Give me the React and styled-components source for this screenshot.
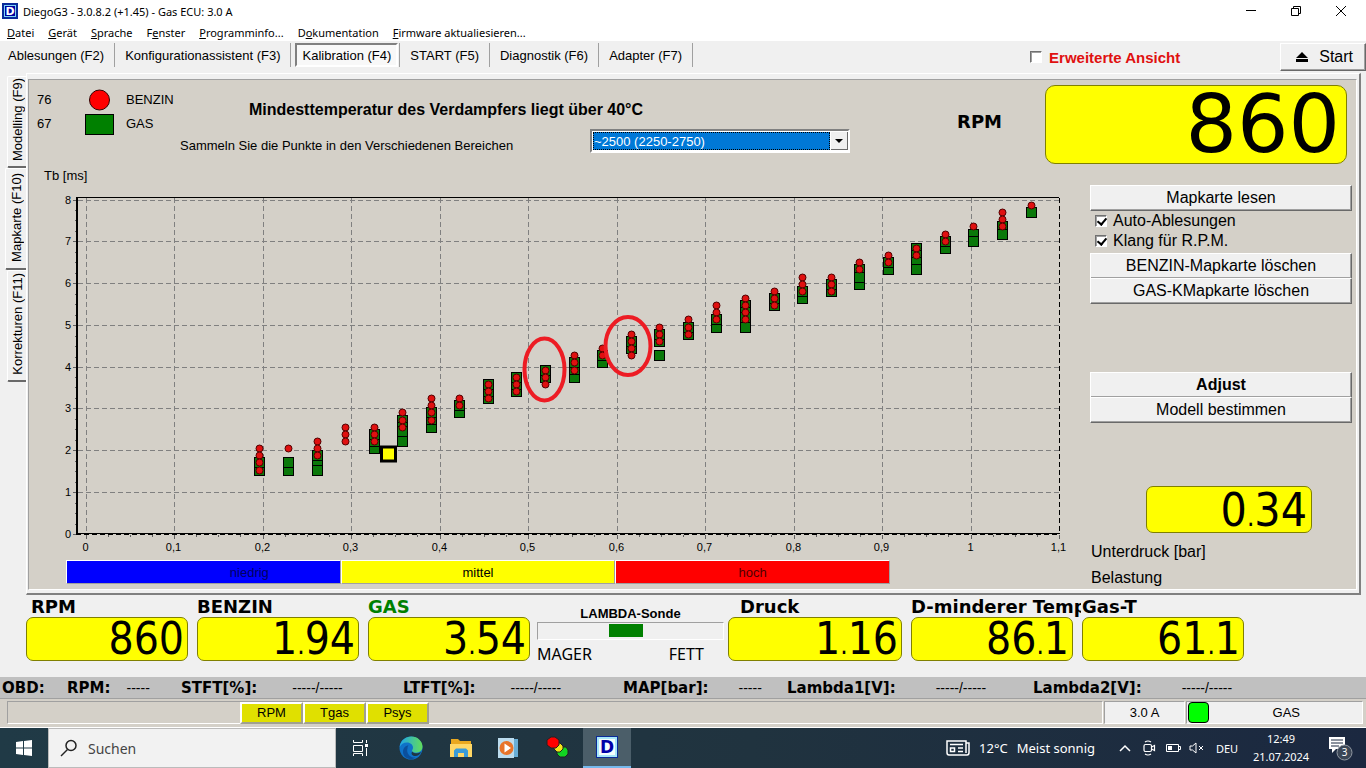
import React from "react";
import styled, { createGlobalStyle } from "styled-components";

const GlobalStyle = createGlobalStyle`
  * {
    box-sizing: border-box;
  }
  body {
    margin: 0;
    background: #f0f0f0;
    color: #000;
    font-family: "Liberation Sans", Arial, sans-serif;
    font-size: 13px;
  }
  button, input, select {
    margin: 0;
    font-family: inherit;
    color: inherit;
  }
`;

const Window = styled.div`
  display: flex;
  flex-direction: column;
  min-height: 100vh;
  overflow: hidden;
`;

/* title bar and menu */

const TitleBar = styled.header`
  display: flex;
  align-items: center;
  height: 22px;
  padding: 0 3px 0 2px;
  background: #fff;
  font-family: "Noto Sans", sans-serif;
`;

const AppBadge = styled.span`
  display: flex;
  align-items: center;
  justify-content: center;
  width: ${(p) => p.$size}px;
  height: ${(p) => p.$size}px;
  border: ${(p) => (p.$glow ? 1 : 2)}px solid #0a2a9a;
  box-shadow: ${(p) => (p.$glow ? "inset 0 0 0 2px #a6e6fb" : "inset 0 0 0 1px #7fd4f5")};
  background: ${(p) => (p.$glow ? "#f4fdff" : "#0000a0")};
  color: ${(p) => (p.$glow ? "#0000a8" : "#fff")};
  font-family: "DejaVu Sans", Verdana, sans-serif;
  font-size: ${(p) => p.$size - 5}px;
  font-weight: bold;
  line-height: 1;
`;

const Title = styled.h1`
  margin: 0 auto 0 5px;
  font-size: 11px;
  font-weight: normal;
`;

const WindowButton = styled.button`
  display: flex;
  align-items: center;
  justify-content: center;
  width: 45px;
  height: 22px;
  padding: 0;
  border: 0;
  background: none;
`;

const MenuBar = styled.nav`
  display: flex;
  align-items: center;
  gap: 14px;
  height: 19px;
  padding: 2px 0 0 7px;
  background: #fff;
  font-family: "Noto Sans", sans-serif;
  font-size: 11px;
`;

const MenuLink = styled.a`
  color: #000;
  text-decoration: none;
  white-space: nowrap;
`;

/* function key tool bar */

const ToolBar = styled.div`
  display: flex;
  align-items: center;
  height: 32px;
`;

const ToolTab = styled.button`
  height: 24px;
  margin: ${(p) => (p.$pressed ? "0 1px 4px 4px" : "0 0 4px")};
  padding: 0 ${(p) => (p.$pressed ? 5 : 10)}px;
  border: ${(p) => (p.$pressed ? "2px solid" : "0 solid")};
  border-color: #808080 #fff #fff #808080;
  background: ${(p) => (p.$pressed ? "#f8f8f8" : "none")};
  font-size: 13px;
  white-space: nowrap;
  &:first-child {
    padding-left: 8px;
  }
`;

const Divider = styled.span`
  width: 1px;
  height: 24px;
  margin-bottom: 4px;
  background: #a0a0a0;
`;

const Extended = styled.label`
  display: flex;
  align-items: center;
  gap: 7px;
  margin: 0 100px 0 auto;
  color: #e01010;
  font-size: 15px;
  font-weight: bold;
`;

const Check = styled.input`
  appearance: none;
  position: relative;
  width: 12px;
  height: 12px;
  border: 1px solid;
  border-color: #707070 #fff #fff #707070;
  box-shadow: inset 1px 1px #a0a0a0;
  background: #fff;
  &:checked::after {
    content: "";
    position: absolute;
    left: 3px;
    top: 0;
    width: 4px;
    height: 7px;
    border: solid #000;
    border-width: 0 2px 2px 0;
    transform: rotate(40deg);
  }
`;

const RaisedButton = styled.button`
  height: 26px;
  padding: 0 8px;
  border: 1px solid;
  border-color: #fff #696969 #696969 #fff;
  box-shadow: inset -1px -1px #a0a0a0;
  background: #f0f0f0;
  font-size: 16px;
  font-weight: ${(p) => (p.$strong ? "bold" : "normal")};
  line-height: 22px;
  white-space: nowrap;
`;

const StartButton = styled(RaisedButton)`
  display: flex;
  align-items: center;
  gap: 11px;
  height: 28px;
  padding: 0 12px 0 15px;
`;

/* main area */

const Main = styled.main`
  display: flex;
  flex: 1;
  padding-right: 5px;
`;

const Rail = styled.div`
  display: flex;
  flex-direction: column;
  align-items: flex-end;
  width: 26px;
  padding-top: 3px;
`;

const RailTab = styled.button`
  width: ${(p) => (p.$active ? 21 : 19)}px;
  height: ${(p) => p.$length}px;
  padding: 0;
  border: solid;
  border-width: 1px 0 2px 1px;
  border-color: #fff #fff #696969 #fff;
  border-radius: 2px 0 0 2px;
  background: #f0f0f0;
  font-size: 13px;
  & > span {
    writing-mode: vertical-rl;
    transform: rotate(180deg);
    white-space: nowrap;
  }
`;

const Sheet = styled.section`
  display: flex;
  flex: 1;
  min-width: 0;
  padding: 5px 2px 3px 1px;
  border: 2px solid;
  border-width: 1px 2px 2px 1px;
  border-color: #fff #808080 #808080 #fff;
`;

const Panel = styled.div`
  flex: 1;
  min-width: 0;
  border: 1px solid;
  border-color: #a0a0a0 #fff #fff #a0a0a0;
  background: #d4d0c8;
`;

const Top = styled.div`
  display: flex;
  align-items: flex-start;
  height: 86px;
  padding: 5px 9px 0 8px;
`;

const Legend = styled.ul`
  display: flex;
  flex-direction: column;
  width: 143px;
  margin: 3px 0 0;
  padding: 0;
  list-style: none;
`;

const LegendItem = styled.li`
  display: grid;
  grid-template-columns: 48px 29px 1fr;
  align-items: center;
  height: 24px;
  line-height: 16px;
  & > b {
    padding-left: 12px;
    font-weight: normal;
  }
`;

const Guide = styled.div`
  display: flex;
  flex-direction: column;
  gap: 10px;
  padding-top: 16px;
`;

const Headline = styled.h2`
  margin: 0;
  padding-left: 69px;
  font-size: 16px;
  line-height: 18px;
`;

const GuideRow = styled.label`
  display: flex;
  align-items: flex-end;
  justify-content: space-between;
  width: 670px;
`;

const ComboBox = styled.div`
  position: relative;
  width: 260px;
  height: 24px;
  padding: 1px;
  border: 2px solid;
  border-color: #808080 #fff #fff #808080;
  background: #fff;
  & > svg {
    position: absolute;
    top: 1px;
    right: 0;
    pointer-events: none;
  }
`;

const RangeSelect = styled.select`
  display: block;
  appearance: none;
  width: 237px;
  height: 18px;
  padding: 0 1px;
  border: 0;
  outline: 1px dotted #000;
  outline-offset: -1px;
  border-radius: 0;
  background: #0078d7;
  color: #fff;
  font-size: 13px;
`;

const GaugeTitle = styled.h3`
  margin: 0;
  overflow: hidden;
  color: ${(p) => p.$color || "#000"};
  font-family: "DejaVu Sans", Verdana, sans-serif;
  font-size: 18px;
  line-height: 20px;
  white-space: nowrap;
`;

const MainReading = styled.div`
  display: flex;
  flex: 1;
  justify-content: flex-end;
  gap: 43px;
  & > h3 {
    padding-top: 27px;
  }
`;

const lcdSizes = {
  large: { width: 302, height: 79, font: 81, face: "DejaVu Sans", pad: 6, radius: 10 },
  medium: { width: 166, height: 47, font: 46, face: "DejaVu Sans Condensed", pad: 4, radius: 7 },
  small: { width: 162, height: 44, font: 44, face: "DejaVu Sans Condensed", pad: 3, radius: 7 },
  wide: { width: 174, height: 44, font: 44, face: "DejaVu Sans Condensed", pad: 3, radius: 7 },
};

const LcdFrame = styled.output`
  display: flex;
  align-items: center;
  justify-content: flex-end;
  width: ${(p) => p.$lcd.width}px;
  height: ${(p) => p.$lcd.height}px;
  padding-right: ${(p) => p.$lcd.pad}px;
  border: 1px solid #808000;
  border-radius: ${(p) => p.$lcd.radius}px;
  background: #ff0;
  color: #000;
  font-family: "${(p) => p.$lcd.face}", "DejaVu Sans", Verdana, sans-serif;
  font-size: ${(p) => p.$lcd.font}px;
  line-height: 1;
`;

/* the decimal point is set smaller than the digits to keep them close */
const Point = styled.span`
  font-size: 26px;
`;

const Body = styled.div`
  display: flex;
  justify-content: space-between;
`;

const ChartColumn = styled.div`
  flex: 1;
  min-width: 0;
`;

const AxisName = styled.div`
  height: 22px;
  padding: 2px 0 0 15px;
`;

const ChartSvg = styled.svg`
  display: block;
  width: 100%;
  height: auto;
  font-family: "Liberation Sans", Arial, sans-serif;
  font-size: 11px;
`;

const LoadBar = styled.div`
  display: grid;
  grid-template-columns: repeat(3, 1fr);
  margin: 0 190px 3px 37px;
`;

const LoadZone = styled.div`
  height: 24px;
  padding-left: ${(p) => p.$indent || 0}px;
  border: 1px solid;
  border-color: #fff #a0a0a0 #a0a0a0 #fff;
  background: ${(p) => p.$color};
  color: ${(p) => p.$ink || "#000"};
  line-height: 24px;
  text-align: center;
`;

const Side = styled.aside`
  display: flex;
  flex-direction: column;
  width: 276px;
  padding: 19px 4px 0 10px;
`;

const CheckRow = styled.label`
  display: flex;
  align-items: center;
  gap: 6px;
  height: 20px;
  padding-left: 5px;
  font-size: 16px;
`;

const ButtonGroup = styled.div`
  display: grid;
  grid-auto-rows: 25px;
  margin-top: ${(p) => p.$space}px;
`;

const LoadReading = styled.div`
  margin: 64px 0 2px 56px;
`;

const SideText = styled.div`
  margin-top: 8px;
  padding-left: 1px;
  font-size: 16px;
  line-height: 18px;
`;

/* readings under the sheet */

const Readings = styled.section`
  display: flex;
  gap: 9px;
  height: 82px;
  padding: 2px 0 0 26px;
`;

const Gauge = styled.div`
  width: ${(p) => p.$width}px;
  & > h3 {
    margin-right: -8px;
    padding-left: ${(p) => p.$indent || 0}px;
  }
`;

const Lambda = styled.div`
  width: 187px;
  margin: 0 -5px 0 -2px;
  padding-top: 9px;
  text-align: center;
  font-weight: bold;
  line-height: 16px;
`;

const LambdaTrack = styled.div`
  height: 18px;
  padding: 1px 80px 3px 71px;
  border: 1px solid;
  border-color: #a0a0a0 #fff #fff #a0a0a0;
  & > div {
    height: 13px;
    background: #008000;
  }
`;

const LambdaEnds = styled.div`
  display: flex;
  justify-content: space-between;
  padding: 4px 20px 0 0;
  font-family: "Noto Sans", Tahoma, sans-serif;
  font-size: 16px;
  font-weight: normal;
  line-height: 20px;
`;

const ObdBar = styled.section`
  display: grid;
  grid-template-columns: 65px 114px 222px 220px 164px 246px 1fr;
  align-items: center;
  height: 22px;
  padding-left: 2px;
  border-bottom: 1px solid #a0a0a0;
  background: #c0c0c0;
  font-size: 14px;
`;

const ObdItem = styled.div`
  display: flex;
  align-items: center;
  gap: ${(p) => p.$gap || 0}px;
  white-space: nowrap;
  & > b {
    font-family: "DejaVu Sans", Verdana, sans-serif;
    font-size: 15px;
  }
`;

const StatusBar = styled.footer`
  display: flex;
  gap: 1px;
  height: 29px;
  padding: 2px 3px 3px 7px;
  background: #d4d0c8;
  border-bottom: 1px solid #fff;
`;

const StatusCell = styled.div`
  display: flex;
  flex: ${(p) => (p.$width ? "none" : 1)};
  align-items: center;
  justify-content: ${(p) => (p.$width ? "center" : "flex-start")};
  width: ${(p) => (p.$width ? p.$width + "px" : "auto")};
  padding-left: ${(p) => p.$indent || 0}px;
  border: 1px solid;
  border-color: #a0a0a0 #fff #fff #a0a0a0;
  background: ${(p) => (p.$width ? "#f0f0f0" : "#d4d0c8")};
`;

const SensorButton = styled.button`
  width: 63px;
  height: 22px;
  padding: 0;
  border: 2px solid;
  border-color: #fff #a0a090 #a0a090 #fff;
  background: #e0e000;
  font-size: 13px;
`;

const FuelLamp = styled.span`
  width: 21px;
  height: 21px;
  margin: 0 auto 0 1px;
  border: 1px solid #000;
  border-radius: 4px;
  background: #0f0;
`;

const FuelName = styled.span`
  margin-right: 62px;
`;

/* desktop task bar */

const TaskBar = styled.nav`
  display: flex;
  align-items: center;
  height: 40px;
  background: linear-gradient(90deg, #203a46, #20333f 55%, #1b2840);
  color: #fff;
  font-family: "Noto Sans", sans-serif;
`;

const TaskButton = styled.button`
  display: flex;
  align-items: center;
  justify-content: center;
  width: ${(p) => p.$width || 49}px;
  height: 40px;
  padding: 0;
  border: solid #76b9ed;
  border-width: ${(p) => (p.$active ? "0 0 2px" : 0)};
  background: ${(p) => (p.$active ? "#4b5e69" : "none")};
  color: #fff;
  font-size: 11px;
`;

const SearchBox = styled.label`
  display: flex;
  align-items: center;
  gap: 10px;
  width: 288px;
  height: 40px;
  padding-left: 11px;
  border: 1px solid #bbb;
  background: #f2f2f2;
  & > input {
    width: 200px;
    padding: 0;
    border: 0;
    outline: 0;
    background: none;
    font-size: 14px;
  }
  & > input::placeholder {
    color: #444;
  }
`;

const Weather = styled.button`
  display: flex;
  align-items: center;
  gap: 9px;
  margin: 0 18px 0 auto;
  padding: 0;
  border: 0;
  background: none;
  color: #fff;
  font-size: 13px;
  white-space: nowrap;
`;

const Clock = styled.time`
  width: 70px;
  font-size: 11px;
  line-height: 18px;
  text-align: center;
`;

const columns = [
  { x: 259, petrol: [448, 455, 462, 470], gas: [465, 457] },
  { x: 288, petrol: [448], gas: [465, 457] },
  { x: 317, petrol: [441, 448, 455], gas: [457, 450, 465] },
  { x: 345, petrol: [427, 434, 441], gas: [] },
  { x: 374, petrol: [427, 434, 441], gas: [443, 436, 429] },
  { x: 402, petrol: [412, 420, 427], gas: [415, 422, 426, 436] },
  { x: 431, petrol: [398, 405, 412, 420], gas: [422, 414, 407] },
  { x: 459, petrol: [398, 405], gas: [407, 400] },
  { x: 488, petrol: [384, 391, 398], gas: [393, 386, 379] },
  { x: 516, petrol: [377, 384, 391], gas: [386, 379, 372] },
  { x: 545, petrol: [370, 377, 384], gas: [372, 365] },
  { x: 574, petrol: [355, 362, 370], gas: [372, 364, 357] },
  { x: 602, petrol: [348, 355], gas: [357, 350] },
  { x: 631, petrol: [334, 341, 348, 355], gas: [343, 336] },
  { x: 659, petrol: [327, 334, 341], gas: [336, 329, 350] },
  { x: 688, petrol: [319, 327, 334], gas: [329, 322] },
  { x: 716, petrol: [305, 312, 319], gas: [322, 314] },
  { x: 745, petrol: [298, 305, 312, 319], gas: [300, 307, 312, 322] },
  { x: 774, petrol: [291, 298, 305], gas: [300, 293] },
  { x: 802, petrol: [277, 284, 291], gas: [293, 286] },
  { x: 831, petrol: [277, 284, 291], gas: [286, 279] },
  { x: 859, petrol: [262, 269], gas: [279, 264, 272] },
  { x: 888, petrol: [255, 262], gas: [264, 257] },
  { x: 916, petrol: [248, 255], gas: [243, 250, 257, 264] },
  { x: 945, petrol: [234, 241], gas: [243, 236] },
  { x: 973, petrol: [226], gas: [229, 236] },
  { x: 1002, petrol: [212, 219, 226], gas: [221, 229] },
  { x: 1031, petrol: [205], gas: [207] },
];

const xTicks = ["0", "0,1", "0,2", "0,3", "0,4", "0,5", "0,6", "0,7", "0,8", "0,9", "1", "1,1"];
const yTicks = [0, 1, 2, 3, 4, 5, 6, 7, 8];
const xPos = (i) => Math.floor(86 + i * 88.5) + 0.5;
const yPos = (v) => Math.floor(534 - v * 41.75) + 0.5;

const MapChart = () => (
  <ChartSvg viewBox="29 188 1051 372" role="img" aria-label="Mapkarte">
    <g stroke="#808080" strokeDasharray="5 3">
      {xTicks.slice(0, -1).map((t, i) => (
        <line key={t} x1={xPos(i)} x2={xPos(i)} y1="198" y2="534" />
      ))}
      {yTicks.slice(1).map((t) => (
        <line key={t} x1="78" x2="1059" y1={yPos(t)} y2={yPos(t)} />
      ))}
    </g>
    <g stroke="#606060">
      {xTicks.map((t, i) => (
        <line key={t} x1={xPos(i)} x2={xPos(i)} y1="535" y2="539" />
      ))}
      {xTicks.slice(0, -1).flatMap((t, i) =>
        [22, 44, 66].map((d) => (
          <line key={t + d} x1={xPos(i) + d} x2={xPos(i) + d} y1="535" y2="537" />
        ))
      )}
      {yTicks.map((t) => (
        <line key={t} x1="73" x2="77" y1={yPos(t)} y2={yPos(t)} />
      ))}
      {yTicks.slice(0, -1).flatMap((t) =>
        [10, 21, 31].map((d) => (
          <line key={t + "-" + d} x1="75" x2="77" y1={yPos(t) - d} y2={yPos(t) - d} />
        ))
      )}
    </g>
    <path d="M76 197.5H1059" stroke="#000" />
    <path d="M77 197V534" stroke="#000" strokeWidth="2" />
    <path d="M76 533.5H1060" stroke="#000" />
    <path d="M76 534.5H1060" stroke="#000" strokeDasharray="5 3" />
    <path d="M1059.5 198V534" stroke="#000" strokeDasharray="5 3" />
    {xTicks.map((t, i) => (
      <text key={t} x={xPos(i) - 1} y="551" textAnchor="middle">{t}</text>
    ))}
    {yTicks.map((t) => (
      <text key={t} x="71" y={yPos(t) + 3.5} textAnchor="end">{t}</text>
    ))}
    {columns.map((c) => (
      <g key={c.x} stroke="#000">
        {c.gas.map((y) => (
          <rect key={y} x={c.x - 4.5} y={y + 0.5} width="10" height="10" fill="#0a780a" />
        ))}
        {c.petrol.map((y) => (
          <circle key={y} cx={c.x + 0.5} cy={y + 0.5} r="3.5" fill="#e01010" stroke="#500000" />
        ))}
      </g>
    ))}
    <rect x="381.5" y="447" width="14" height="14" fill="#ff0" stroke="#000" strokeWidth="3" />
    <g fill="none" stroke="#ed1c24" strokeWidth="4">
      <ellipse cx="544.5" cy="369.5" rx="20" ry="31" />
      <ellipse cx="628" cy="346" rx="22.5" ry="29" />
    </g>
  </ChartSvg>
);

const Lcd = ({ size, value, label }) => {
  const [whole, part] = value.split(".");
  return (
    <LcdFrame $lcd={lcdSizes[size]} aria-label={label}>
      <span>
        {whole}
        {part && <Point>.</Point>}
        {part}
      </span>
    </LcdFrame>
  );
};

const TaskIcons = () => (
  <>
    <TaskButton aria-label="Taskansicht" $width={48}>
      <svg width="17" height="16" viewBox="0 0 17 16" fill="none" stroke="#fff">
        <path d="M1.5 0V2.5H10.5V0M1.5 16V13.5H10.5V16M1.5 5.5H10.5V11.5H1.5ZM14.5 0V3M14.5 8V16" />
        <rect x="13.5" y="4.5" width="2" height="2" fill="#fff" />
      </svg>
    </TaskButton>
    <TaskButton aria-label="Edge" $width={54}>
      <svg width="24" height="24" viewBox="0 0 24 24">
        <defs>
          <linearGradient id="edgeTop" x1="0" x2="1">
            <stop offset="0" stopColor="#1fa5e8" />
            <stop offset="1" stopColor="#62dd5a" />
          </linearGradient>
        </defs>
        <circle cx="12" cy="12" r="11.5" fill="#0f72c8" />
        <path d="M.7 11C1.5 4 7 .5 12.3 .5 19 .5 23.5 5.5 23.5 10.5c0 4-3 6.200-6.200 6.200-3 0-4.300-1-4.300-2 0-.8 1-1.300 1-3.200C14 9 11.5 6.5 8 6.5 4.5 6.5 1.8 8.5.7 11Z" fill="url(#edgeTop)" />
        <path d="M8.5 12.5C7 17 11 22 16.5 21.5 12 25 4 22.5 4 16c0-4 2.5-6.5 5.5-6.5-1 .8-1 2-1 3Z" fill="#0b4f9c" />
        <path d="M13.2 15.5c1 2 5.5 2.5 8.8.5-1 2.8-3.5 4-5.5 4-3 0-5-2-3.3-4.500Z" fill="#203642" />
      </svg>
    </TaskButton>
    <TaskButton aria-label="Explorer" $width={45}>
      <svg width="22" height="19" viewBox="0 0 22 19">
        <path d="M1 0H8L10 2H21V18H1Z" fill="#e9a820" />
        <path d="M0 5H22V18H0Z" fill="#ffd766" />
        <path d="M4 18V11.5L6 9.5H16L18 11.5V18H14V14H8V18Z" fill="#3a9bd8" />
      </svg>
    </TaskButton>
    <TaskButton aria-label="Medien" $width={50}>
      <svg width="20" height="20" viewBox="0 0 20 20">
        <rect x="3" y="1" width="17" height="18" fill="#69aed6" />
        <rect x="0" y="0" width="16" height="20" fill="#bcdcee" />
        <circle cx="8.5" cy="10" r="7" fill="#e8742a" />
        <path d="M6.5 5.5L13 10L6.5 14.5Z" fill="#fff" />
      </svg>
    </TaskButton>
    <TaskButton aria-label="Ampel" $width={50}>
      <svg width="24" height="24" viewBox="0 0 24 24" stroke="#222">
        <path d="M14 11H20L22 14V18L19 21H14L11 18V14Z" fill="#12d422" />
        <path d="M10 7H14L17 10V13L14 16H11L8 13V10Z" fill="#f5e51b" />
        <path d="M5 1H9L13 4V9L10 12H5L1 9V4Z" fill="#f00" />
      </svg>
    </TaskButton>
    <TaskButton aria-label="DiegoG3" $width={48} $active>
      <AppBadge $size={22} $glow>D</AppBadge>
    </TaskButton>
  </>
);

const Tray = () => (
  <>
    <Weather>
      <svg width="24" height="16" viewBox="0 0 24 16" fill="none" stroke="#fff" strokeWidth="1.5">
        <path d="M20 3H23V12.5C23 14 22 15 21 15H3C2 15 1 14 1 12.5V1H20V13M4 4.5H17M12 8H17M12 11.5H17" />
        <rect x="4.5" y="8" width="4" height="3.5" />
      </svg>
      <span>12°C</span>
      <span>Meist sonnig</span>
    </Weather>
    <TaskButton $width={24} aria-label="Weitere Symbole">
      <svg width="12" height="8" fill="none" stroke="#fff" strokeWidth="1.5">
        <path d="M1 7L6 2L11 7" />
      </svg>
    </TaskButton>
    <TaskButton $width={24} aria-label="Kamera">
      <svg width="14" height="16" viewBox="0 0 14 16" fill="none" stroke="#fff" strokeWidth="1.2">
        <rect x="2" y="4.5" width="7.5" height="7" rx="1.5" />
        <path d="M9.5 7L12.5 5.5V10.5L9.5 9M3 2Q6 0 9 2M3 14Q6 16 9 14" />
      </svg>
    </TaskButton>
    <TaskButton $width={24} aria-label="Akku">
      <svg width="15" height="10" viewBox="0 0 15 10" fill="none" stroke="#fff">
        <path d="M.5 1.5H12.5V8.5H.5ZM12.5 3.5H14.5V6.5H12.5" />
        <rect x="2" y="3" width="4" height="4" fill="#fff" stroke="none" />
      </svg>
    </TaskButton>
    <TaskButton $width={23} aria-label="Ton aus">
      <svg width="16" height="12" viewBox="0 0 16 12" fill="none" stroke="#fff">
        <path d="M1 4H3.5L7 1V11L3.5 8H1ZM10 4L14 8M14 4L10 8" />
      </svg>
    </TaskButton>
    <TaskButton $width={38}>DEU</TaskButton>
    <Clock>
      12:49
      <br />
      21.07.2024
    </Clock>
    <TaskButton $width={50} aria-label="3 Benachrichtigungen">
      <svg width="28" height="28" viewBox="0 0 28 28">
        <path d="M2 3H18V15H9L5 19V15H2Z" fill="#fff" />
        <path d="M4 6H16M4 9H16M4 12H12" stroke="#1b2840" />
        <circle cx="17.5" cy="18.5" r="7.5" fill="#3b4656" stroke="#9098a2" />
        <text x="17.5" y="22" fill="#fff" fontSize="10" textAnchor="middle">3</text>
      </svg>
    </TaskButton>
  </>
);

const App = () => {
  return (
    <Window>
      <GlobalStyle />
      <TitleBar>
        <AppBadge $size={16}>D</AppBadge>
        <Title>DiegoG3 - 3.0.8.2 (+1.45) - Gas ECU: 3.0 A</Title>
        <WindowButton aria-label="Minimieren">
          <svg width="10" height="10" stroke="#000"><path d="M0 4.500H10" /></svg>
        </WindowButton>
        <WindowButton aria-label="Wiederherstellen">
          <svg width="10" height="10" fill="none" stroke="#000">
            <path d="M.5 2.5H7.5V9.5H.5ZM2.5 2.5V.5H9.5V7.5H7.5" />
          </svg>
        </WindowButton>
        <WindowButton aria-label="Schließen">
          <svg width="10" height="10" stroke="#000"><path d="M0 0L10 10M10 0L0 10" /></svg>
        </WindowButton>
      </TitleBar>

      <MenuBar>
        <MenuLink href="#"><u>D</u>atei</MenuLink>
        <MenuLink href="#"><u>G</u>erät</MenuLink>
        <MenuLink href="#"><u>S</u>prache</MenuLink>
        <MenuLink href="#">F<u>e</u>nster</MenuLink>
        <MenuLink href="#"><u>P</u>rogramminfo...</MenuLink>
        <MenuLink href="#">D<u>o</u>kumentation</MenuLink>
        <MenuLink href="#"><u>F</u>irmware aktualiesieren...</MenuLink>
      </MenuBar>

      <ToolBar>
        <ToolTab>Ablesungen (F2)</ToolTab>
        <Divider />
        <ToolTab>Konfigurationassistent (F3)</ToolTab>
        <Divider />
        <ToolTab $pressed>Kalibration (F4)</ToolTab>
        <Divider />
        <ToolTab>START (F5)</ToolTab>
        <Divider />
        <ToolTab>Diagnostik (F6)</ToolTab>
        <Divider />
        <ToolTab>Adapter (F7)</ToolTab>
        <Divider />
        <Extended>
          <Check type="checkbox" />
          Erweiterte Ansicht
        </Extended>
        <StartButton>
          <svg width="12" height="10"><path d="M6 0L12 6H0ZM0 7H12V10H0Z" /></svg>
          Start
        </StartButton>
      </ToolBar>

      <Main>
        <Rail>
          <RailTab $length={92}><span>Modelling (F9)</span></RailTab>
          <RailTab $length={102} $active><span>Mapkarte (F10)</span></RailTab>
          <RailTab $length={112}><span>Korrekturen (F11)</span></RailTab>
        </Rail>
        <Sheet>
          <Panel>
            <Top>
              <Legend>
                <LegendItem>
                  76
                  <svg width="29" height="22"><circle cx="14.5" cy="11" r="10" fill="#f00" stroke="#300" /></svg>
                  <b>BENZIN</b>
                </LegendItem>
                <LegendItem>
                  67
                  <svg width="29" height="22"><rect x=".5" y="1.5" width="28" height="20" fill="#008000" stroke="#000" /></svg>
                  <b>GAS</b>
                </LegendItem>
              </Legend>
              <Guide>
                <Headline>Mindesttemperatur des Verdampfers liegt über 40°C</Headline>
                <GuideRow>
                  Sammeln Sie die Punkte in den Verschiedenen Bereichen
                  <ComboBox>
                    <RangeSelect defaultValue="2500">
                      <option value="2500">~2500 (2250-2750)</option>
                    </RangeSelect>
                    <svg width="17" height="18">
                      <rect width="17" height="18" fill="#696969" />
                      <rect width="16" height="17" fill="#f0f0f0" />
                      <path d="M4 7H12L8 11Z" />
                    </svg>
                  </ComboBox>
                </GuideRow>
              </Guide>
              <MainReading>
                <GaugeTitle>RPM</GaugeTitle>
                <Lcd size="large" value="860" label="RPM" />
              </MainReading>
            </Top>
            <Body>
              <ChartColumn>
                <AxisName>Tb [ms]</AxisName>
                <MapChart />
                <LoadBar>
                  <LoadZone $color="#00f" $ink="#000060" $indent={92}>niedrig</LoadZone>
                  <LoadZone $color="#ff0">mittel</LoadZone>
                  <LoadZone $color="#f00" $ink="#500000">hoch</LoadZone>
                </LoadBar>
              </ChartColumn>
              <Side>
                <RaisedButton>Mapkarte lesen</RaisedButton>
                <CheckRow>
                  <Check type="checkbox" defaultChecked />
                  Auto-Ablesungen
                </CheckRow>
                <CheckRow>
                  <Check type="checkbox" defaultChecked />
                  Klang für R.P.M.
                </CheckRow>
                <ButtonGroup $space={2}>
                  <RaisedButton>BENZIN-Mapkarte löschen</RaisedButton>
                  <RaisedButton>GAS-KMapkarte löschen</RaisedButton>
                </ButtonGroup>
                <ButtonGroup $space={69}>
                  <RaisedButton $strong>Adjust</RaisedButton>
                  <RaisedButton>Modell bestimmen</RaisedButton>
                </ButtonGroup>
                <LoadReading>
                  <Lcd size="medium" value="0.34" label="Unterdruck" />
                </LoadReading>
                <SideText>Unterdruck [bar]</SideText>
                <SideText>Belastung</SideText>
              </Side>
            </Body>
          </Panel>
        </Sheet>
      </Main>

      <Readings>
        <Gauge $width={162} $indent={5}>
          <GaugeTitle>RPM</GaugeTitle>
          <Lcd size="small" value="860" label="RPM" />
        </Gauge>
        <Gauge $width={162}>
          <GaugeTitle>BENZIN</GaugeTitle>
          <Lcd size="small" value="1.94" label="BENZIN" />
        </Gauge>
        <Gauge $width={162}>
          <GaugeTitle $color="#008000">GAS</GaugeTitle>
          <Lcd size="small" value="3.54" label="GAS" />
        </Gauge>
        <Lambda>
          LAMBDA-Sonde
          <LambdaTrack><div /></LambdaTrack>
          <LambdaEnds>
            <span>MAGER</span>
            <span>FETT</span>
          </LambdaEnds>
        </Lambda>
        <Gauge $width={174} $indent={12}>
          <GaugeTitle>Druck</GaugeTitle>
          <Lcd size="wide" value="1.16" label="Druck" />
        </Gauge>
        <Gauge $width={162}>
          <GaugeTitle>D-minderer Temp</GaugeTitle>
          <Lcd size="small" value="86.1" label="D-minderer Temp" />
        </Gauge>
        <Gauge $width={162}>
          <GaugeTitle>Gas-T</GaugeTitle>
          <Lcd size="small" value="61.1" label="Gas-T" />
        </Gauge>
      </Readings>

      <ObdBar>
        <ObdItem><b>OBD:</b></ObdItem>
        <ObdItem $gap={16}><b>RPM:</b>-----</ObdItem>
        <ObdItem $gap={35}><b>STFT[%]:</b>-----/-----</ObdItem>
        <ObdItem $gap={35}><b>LTFT[%]:</b>-----/-----</ObdItem>
        <ObdItem $gap={30}><b>MAP[bar]:</b>-----</ObdItem>
        <ObdItem $gap={40}><b>Lambda1[V]:</b>-----/-----</ObdItem>
        <ObdItem $gap={40}><b>Lambda2[V]:</b>-----/-----</ObdItem>
      </ObdBar>

      <StatusBar>
        <StatusCell $indent={232}>
          <SensorButton>RPM</SensorButton>
          <SensorButton>Tgas</SensorButton>
          <SensorButton>Psys</SensorButton>
        </StatusCell>
        <StatusCell $width={81}>3.0 A</StatusCell>
        <StatusCell $width={177}>
          <FuelLamp />
          <FuelName>GAS</FuelName>
        </StatusCell>
      </StatusBar>

      <TaskBar>
        <TaskButton $width={48} aria-label="Start">
          <svg width="16" height="16" fill="#fff">
            <path d="M0 2L7 1V7.5H0ZM8 1L16 0V7.5H8ZM0 8.5H7V15L0 14ZM8 8.5H16V16L8 15Z" />
          </svg>
        </TaskButton>
        <SearchBox>
          <svg width="18" height="18" fill="none" stroke="#222" strokeWidth="1.5">
            <circle cx="11" cy="6.5" r="5" />
            <path d="M7.5 10.5L1 17" />
          </svg>
          <input type="text" placeholder="Suchen" aria-label="Suchen" />
        </SearchBox>
        <TaskIcons />
        <Tray />
      </TaskBar>
    </Window>
  );
};

export default App;
